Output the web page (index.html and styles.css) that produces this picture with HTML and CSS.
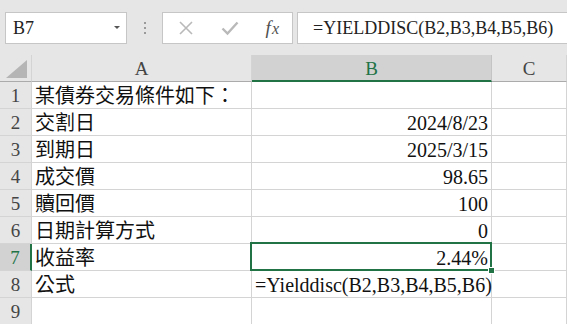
FILE: index.html
```html
<!DOCTYPE html>
<html lang="zh-Hant">
<head>
    <meta charset="UTF-8">
    <title>YIELDDISC</title>
    <link rel="stylesheet" href="styles.css">
</head>
<body>
    <div class="toolbar">
        <div class="name-box">
            <span>B7</span>
            <span class="arrow"></span>
        </div>
        <div class="grip">
            <span></span><span></span><span></span>
        </div>
        <div class="fx-buttons">
            <svg class="btn" width="16" height="16" viewBox="0 0 16 16">
                <path d="M2 2 L14 14 M14 2 L2 14" stroke="#b9b9b9" stroke-width="1.6" fill="none"/>
            </svg>
            <svg class="btn" width="18" height="16" viewBox="0 0 18 16">
                <path d="M1.5 8.5 L6.5 13.5 L16.5 2.5" stroke="#b9b9b9" stroke-width="2.4" fill="none"/>
            </svg>
            <span class="fx">f<span>x</span></span>
        </div>
        <div class="formula">=YIELDDISC(B2,B3,B4,B5,B6)</div>
    </div>

    <div class="sheet">
        <!-- 欄標題 -->
        <div class="head corner">
            <svg width="22" height="18" viewBox="0 0 22 18"><path d="M21 0 L21 18 L0 18 Z" fill="#b5b5b5"/></svg>
        </div>
        <div class="head col">A</div>
        <div class="head col active">B</div>
        <div class="head col">C</div>

        <div class="head row">1</div>
        <div class="cell">某債券交易條件如下：</div>
        <div class="cell"></div>
        <div class="cell"></div>

        <div class="head row">2</div>
        <div class="cell">交割日</div>
        <div class="cell num">2024/8/23</div>
        <div class="cell"></div>

        <div class="head row">3</div>
        <div class="cell">到期日</div>
        <div class="cell num">2025/3/15</div>
        <div class="cell"></div>

        <div class="head row">4</div>
        <div class="cell">成交價</div>
        <div class="cell num">98.65</div>
        <div class="cell"></div>

        <div class="head row">5</div>
        <div class="cell">贖回價</div>
        <div class="cell num">100</div>
        <div class="cell"></div>

        <div class="head row">6</div>
        <div class="cell">日期計算方式</div>
        <div class="cell num">0</div>
        <div class="cell"></div>

        <div class="head row active">7</div>
        <div class="cell">收益率</div>
        <div class="cell num selected">2.44%</div>
        <div class="cell"></div>

        <div class="head row">8</div>
        <div class="cell">公式</div>
        <div class="cell">=Yielddisc(B2,B3,B4,B5,B6)</div>
        <div class="cell"></div>

        <div class="head row">9</div>
        <div class="cell"></div>
        <div class="cell"></div>
        <div class="cell"></div>
    </div>
</body>
</html>
```

FILE: styles.css
```css
body {
    margin: 0;
    background: #fff;
    font-family: 'Liberation Serif', 'Noto Sans CJK TC', serif;
    overflow: hidden;
}

/* 公式列 */
.toolbar {
    display: flex;
    align-items: flex-start;
    height: 55px;
    padding: 12px 0 0 5px;
    box-sizing: border-box;
    background: #e6e6e6;
}

.name-box {
    width: 122px;
    height: 32px;
    box-sizing: border-box;
    background: #fff;
    border: 1px solid #c6c6c6;
    display: flex;
    align-items: center;
    justify-content: space-between;
    padding: 0 6px 0 7px;
    font-size: 18px;
    color: #222;
}

.name-box .arrow {
    width: 0;
    height: 0;
    border-left: 3px solid transparent;
    border-right: 3px solid transparent;
    border-top: 3px solid #555;
    margin-top: -2px;
}

.grip {
    width: 35px;
    height: 32px;
    display: flex;
    flex-direction: column;
    align-items: center;
    justify-content: center;
    gap: 3px;
}

.grip span {
    width: 2px;
    height: 2px;
    background: #9a9a9a;
}

.fx-buttons {
    width: 131px;
    height: 32px;
    box-sizing: border-box;
    background: #fff;
    border: 1px solid #c6c6c6;
    display: flex;
    align-items: center;
    justify-content: space-between;
    padding: 0 13px 0 15px;
}

.fx {
    font-size: 19px;
    font-style: italic;
    color: #505050;
    font-family: 'Liberation Serif', serif;
}

.fx span {
    font-size: 16px;
    margin-left: 1px;
}

.formula {
    flex: 1;
    height: 32px;
    box-sizing: border-box;
    margin-left: 4px;
    margin-right: -2px;
    background: #fff;
    border: 1px solid #c6c6c6;
    padding-left: 15px;
    font-size: 18px;
    line-height: 30px;
    color: #222;
    white-space: nowrap;
}

/* 工作表 */
.sheet {
    display: grid;
    grid-template-columns: 32px 220px 240px 75px;
    grid-auto-rows: 27px;
}

.head {
    background: #e6e6e6;
    color: #444;
    box-sizing: border-box;
    display: flex;
    align-items: center;
    justify-content: center;
    font-size: 19px;
}

.corner {
    border-right: 1px solid #d4d4d4;
    border-bottom: 1px solid #ababab;
    align-items: flex-end;
    justify-content: flex-end;
    padding: 0 3px 3px 0;
}

.corner svg {
    display: block;
}

.col {
    border-right: 1px solid #d4d4d4;
    border-bottom: 1px solid #ababab;
    padding-top: 2px;
}

.col.active {
    background: #d2d2d2;
    color: #217346;
    border-bottom: 2px solid #217346;
    border-right-color: #c4c4c4;
}

.row {
    border-right: 1px solid #d4d4d4;
    border-bottom: 1px solid #d4d4d4;
    padding-top: 2px;
}

.row.active {
    background: #d2d2d2;
    color: #217346;
    border-right: 2px solid #217346;
}

.cell {
    box-sizing: border-box;
    border-right: 1px solid #d4d4d4;
    border-bottom: 1px solid #d4d4d4;
    font-size: 20px;
    line-height: 26px;
    padding: 1px 3px 0 3px;
    color: #111;
    white-space: nowrap;
    overflow: visible;
}

.num {
    text-align: right;
}

.selected {
    position: relative;
}

.selected::after {
    content: "";
    position: absolute;
    left: -2px;
    top: -2px;
    right: -1px;
    bottom: -1px;
    border: 2px solid #217346;
}

.selected::before {
    content: "";
    position: absolute;
    right: -4px;
    bottom: -4px;
    width: 5px;
    height: 5px;
    background: #217346;
    border: 1px solid #fff;
    z-index: 1;
}
```
